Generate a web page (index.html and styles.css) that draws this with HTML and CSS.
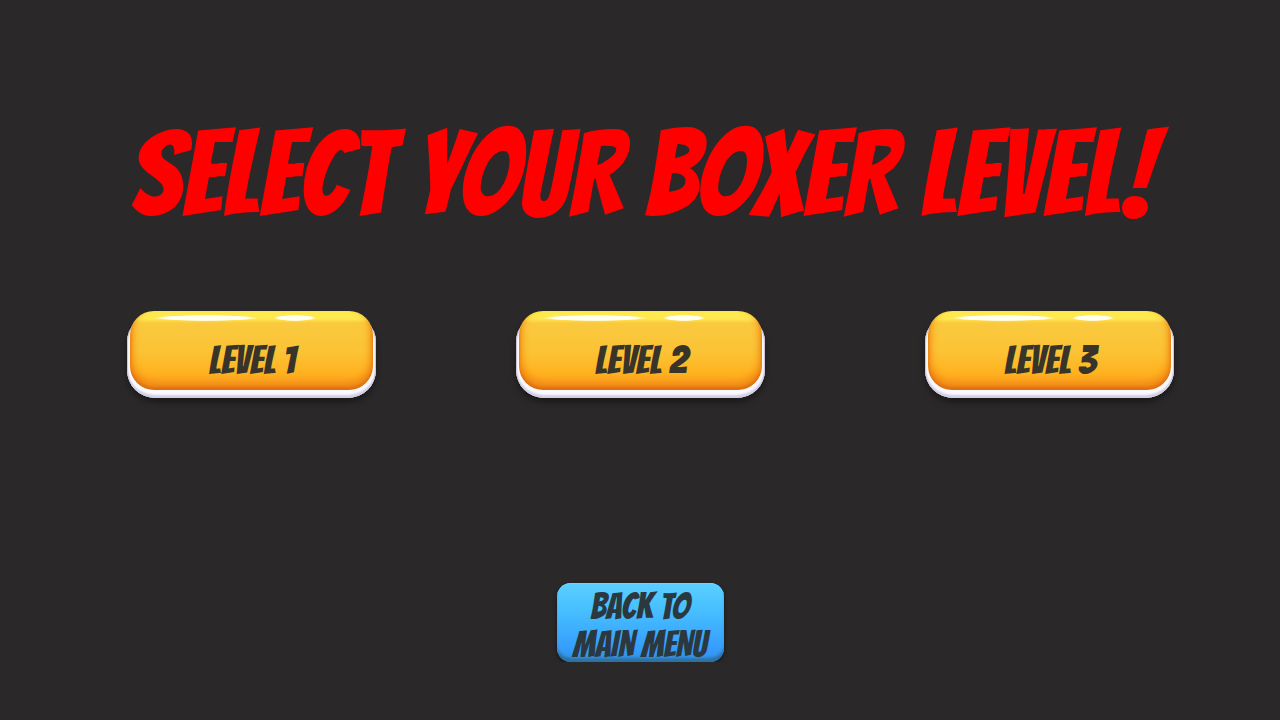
FILE: index.html
```html
<!DOCTYPE html>
<html lang="en">
<head>
<meta charset="UTF-8">
<meta name="viewport" content="width=device-width, initial-scale=1.0">
<title>Select Level</title>
<link rel="stylesheet" href="styles.css">
</head>
<body>

<main class="menu">
    <h1 class="title">SELECT YOUR BOXER LEVEL!</h1>

    <div class="levels">
        <button type="button" class="btn level">LEVEL 1</button>
        <button type="button" class="btn level">LEVEL 2</button>
        <button type="button" class="btn level">LEVEL 3</button>
    </div>

    <button type="button" class="btn back">BACK TO<br>MAIN MENU</button>
</main>

</body>
</html>
```

FILE: styles.css
```css
/* General styles */
* {
    box-sizing: border-box;
}
body {
    margin: 0;
    background-color: #2a2829;
    font-family: Bangers, "Liberation Sans Narrow", "Liberation Sans", sans-serif;
}
.menu {
    display: flex;
    flex-direction: column;
    align-items: center;
    padding-top: 114px;
}
.title {
    margin: 0;
    padding-left: 4px;
    color: #ff0000;
    font-size: 120px;
    font-weight: normal;
    line-height: 120px;
    text-align: center;
    white-space: nowrap;
}

/* Buttons */
.btn {
    border: none;
    padding: 0;
    font-family: inherit;
    color: #38342a;
    cursor: pointer;
}

/* Level buttons */
.levels {
    display: grid;
    grid-template-columns: 389fr 409fr 249px;
    align-self: stretch;
    margin: 77px 8.3% 0 9.9%;
}
.level {
    position: relative;
    z-index: 0;
    width: 249px;
    height: 87px;
    padding: 10px 0 0 2px;
    background: none;
    font-size: 40px;
    line-height: 36px;
}
/* white plate under the button */
.level::before {
    content: "";
    position: absolute;
    z-index: -2;
    inset: 3px 0 0;
    border-radius: 28px;
    background-color: #fbf9ff;
    box-shadow: inset 0 -3px 2px #d2cee4, inset 1px 0 1px #c9bdc8, inset -1px 0 1px #c9bdc8, 0 4px 6px rgba(0, 0, 0, 0.4);
}
/* glossy yellow face */
.level::after {
    content: "";
    position: absolute;
    z-index: -1;
    inset: 0 3px 8px;
    border-radius: 24px;
    background:
        radial-gradient(52px 3px at 76px 7px, #fffff4 80%, transparent),
        radial-gradient(21px 3px at 165px 7px, #fffff4 80%, transparent),
        linear-gradient(#ffec4f 0, #ffe850 8px, #fac93e 12px, #fbc336 40px, #ffb421 60px, #fda31f 100%);
    box-shadow: inset 0 -3px 3px #dc7011, inset 0 -8px 9px #f28a17, inset 4px -4px 7px -2px rgba(240, 130, 15, 0.7), inset -4px -4px 7px -2px rgba(240, 130, 15, 0.7);
}

/* Back button */
.back {
    width: 167px;
    height: 79px;
    padding-top: 5px;
    margin-top: 185px;
    border-radius: 14px;
    background: linear-gradient(#5acfff 0, #47bfff 35%, #369ffc 80%, #3290e9 100%);
    box-shadow: inset 0 -5px 3px -1px #2d719f, inset 0 1px 1px #69d9ff, 0 2px 4px rgba(0, 0, 0, 0.5);
    color: #2c3840;
    font-size: 36px;
    line-height: 38px;
}
```
